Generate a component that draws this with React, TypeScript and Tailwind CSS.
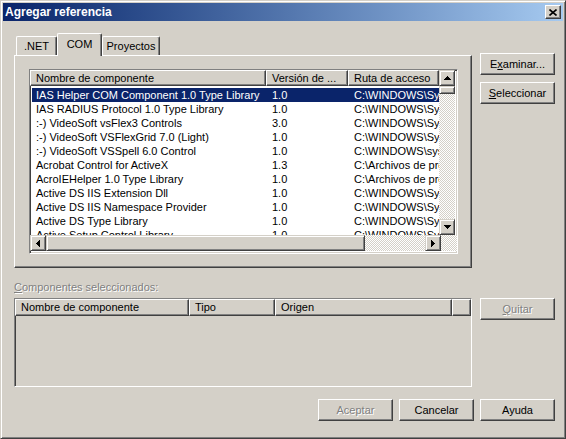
import React from 'react';

const raised = "border border-t-white border-l-white border-r-[#404040] border-b-[#404040] shadow-[inset_-1px_-1px_0_#808080]";
const sunken = "border border-t-[#808080] border-l-[#808080] border-r-white border-b-white shadow-[inset_1px_1px_0_#404040,inset_-1px_-1px_0_#d4d0c8]";
const scrollBtn = "border border-t-[#d4d0c8] border-l-[#d4d0c8] border-r-[#404040] border-b-[#404040] shadow-[inset_1px_1px_0_#ffffff,inset_-1px_-1px_0_#808080] bg-[#d4d0c8] flex items-center justify-center shrink-0";
const checker = "[background:repeating-conic-gradient(#d4d0c8_0_25%,#ffffff_0_50%)_0_0/2px_2px]";
const disabled = "text-[#808080] [text-shadow:1px_1px_0_#ffffff]";

const rows = [
    { name: 'IAS Helper COM Component 1.0 Type Library', ver: '1.0', path: 'C:\\WINDOWS\\System32\\iashlpr.dll' },
    { name: 'IAS RADIUS Protocol 1.0 Type Library', ver: '1.0', path: 'C:\\WINDOWS\\System32\\iasrad.dll' },
    { name: ':-) VideoSoft vsFlex3 Controls', ver: '3.0', path: 'C:\\WINDOWS\\System32\\vsflex3.ocx' },
    { name: ':-) VideoSoft VSFlexGrid 7.0 (Light)', ver: '1.0', path: 'C:\\WINDOWS\\System32\\vsflex7l.ocx' },
    { name: ':-) VideoSoft VSSpell 6.0 Control', ver: '1.0', path: 'C:\\WINDOWS\\system32\\vsspell6.ocx' },
    { name: 'Acrobat Control for ActiveX', ver: '1.3', path: 'C:\\Archivos de programa\\Adobe\\pdf.ocx' },
    { name: 'AcroIEHelper 1.0 Type Library', ver: '1.0', path: 'C:\\Archivos de programa\\Adobe\\AcroIEHelper.dll' },
    { name: 'Active DS IIS Extension Dll', ver: '1.0', path: 'C:\\WINDOWS\\System32\\inetsrv\\iisext.dll' },
    { name: 'Active DS IIS Namespace Provider', ver: '1.0', path: 'C:\\WINDOWS\\System32\\inetsrv\\adsiis.dll' },
    { name: 'Active DS Type Library', ver: '1.0', path: 'C:\\WINDOWS\\System32\\activeds.tlb' },
    { name: 'Active Setup Control Library', ver: '1.0', path: 'C:\\WINDOWS\\System32\\asctrls.ocx' },
];

const Arrow = ({ dir }: { dir: 'up' | 'down' | 'left' | 'right' }) => {
    const d = {
        up: 'M3 0h1v1h1v1h1v1h1v1H0V3h1V2h1V1h1z',
        down: 'M0 0h7v1h-1v1h-1v1h-1v1H3V3H2V2H1V1H0z',
        left: 'M3 0h1v7H3V6H2V5H1V4H0V3h1V2h1V1h1z',
        right: 'M0 0h1v1h1v1h1v1h1v1H3v1H2v1H1v1H0z',
    }[dir];
    const vertical = dir === 'up' || dir === 'down';
    return (
        <svg width={vertical ? 7 : 4} height={vertical ? 4 : 7} viewBox={vertical ? '0 0 7 4' : '0 0 4 7'} shapeRendering="crispEdges">
            <path d={d} fill="#000" />
        </svg>
    );
};

const Button = ({ children, off }: { children: React.ReactNode; off?: boolean }) => (
    <div className={`w-[75px] h-[22px] ${raised} bg-[#d4d0c8] flex items-center justify-center ${off ? disabled : ''}`}>
        <span>{children}</span>
    </div>
);

const HeaderCell = ({ children, w }: { children: React.ReactNode; w: string }) => (
    <div className={`${w} h-full ${raised} bg-[#d4d0c8] pl-[5px] leading-[14px] whitespace-nowrap overflow-hidden shrink-0`}>
        {children}
    </div>
);

const App = () => {
    return (
        <div className="w-[566px] h-[439px] bg-[#d4d0c8] border border-t-[#d4d0c8] border-l-[#d4d0c8] border-r-[#404040] border-b-[#404040] shadow-[inset_1px_1px_0_#ffffff,inset_-1px_-1px_0_#808080] p-[2px] flex flex-col font-['Liberation_Sans',Arial,sans-serif] text-[11px] text-black select-none">
            {/* title bar */}
            <div className="h-[18px] shrink-0 bg-linear-to-r from-[#0a246a] to-[#a6caf0] flex items-center justify-between pl-[2px] pr-[2px]">
                <span className="text-white font-bold text-[12px] leading-[18px]">Agregar referencia</span>
                <div className={`w-[16px] h-[14px] ${raised} bg-[#d4d0c8] flex items-center justify-center`}>
                    <svg width="8" height="7" viewBox="0 0 8 7">
                        <path d="M0.5 0.5l7 6M7.5 0.5l-7 6" stroke="#000" strokeWidth="1.6" />
                    </svg>
                </div>
            </div>

            <div className="flex-1 flex flex-col pl-[11px] pt-[12px]">
                {/* tabs + panel + right buttons */}
                <div className="flex items-start">
                    <div className="w-[458px] flex flex-col">
                        <div className="h-[22px] flex items-end pl-[2px]">
                            <div className="w-[41px] h-[19px] border-t border-l border-white border-r border-r-[#404040] shadow-[inset_-1px_0_0_#808080] rounded-tl-[2px] rounded-tr-[2px] flex items-center justify-center">
                                .NET
                            </div>
                            <div className="relative z-10 w-[45px] h-[23px] -mb-px bg-[#d4d0c8] border-t border-l border-white border-r border-r-[#404040] shadow-[inset_-1px_0_0_#808080] rounded-tl-[2px] rounded-tr-[2px] flex justify-center pt-[2px]">
                                COM
                            </div>
                            <div className="w-[58px] h-[19px] border-t border-l border-white border-r border-r-[#404040] shadow-[inset_-1px_0_0_#808080] rounded-tl-[2px] rounded-tr-[2px] flex items-center justify-center">
                                Proyectos
                            </div>
                        </div>
                        <div className={`h-[213px] ${raised} pl-[14px] pt-[13px]`}>
                            {/* component list */}
                            <div className={`w-[429px] h-[185px] ${sunken} bg-white flex flex-col`}>
                                <div className="flex h-[165px]">
                                    <div className="w-[409px] flex flex-col overflow-hidden">
                                        <div className="flex h-[16px] shrink-0">
                                            <HeaderCell w="w-[236px]">Nombre de componente</HeaderCell>
                                            <HeaderCell w="w-[82px]">Versión de ...</HeaderCell>
                                            <HeaderCell w="flex-1">Ruta de acceso</HeaderCell>
                                        </div>
                                        <div className="pt-[2px]">
                                            {rows.map((r, i) => (
                                                <div
                                                    key={r.name}
                                                    className={`flex h-[14px] leading-[14px] ml-[2px] whitespace-nowrap ${i === 0 ? 'bg-[#0a246a] text-white' : ''}`}
                                                >
                                                    <div className="w-[234px] pl-[4px] overflow-hidden shrink-0">{r.name}</div>
                                                    <div className="w-[82px] pl-[6px] shrink-0">{r.ver}</div>
                                                    <div className="flex-1 pl-[6px] overflow-hidden">{r.path}</div>
                                                </div>
                                            ))}
                                        </div>
                                    </div>
                                    {/* vertical scrollbar */}
                                    <div className="w-[16px] flex flex-col">
                                        <div className={`h-[16px] ${scrollBtn}`}><Arrow dir="up" /></div>
                                        <div className={`h-[8px] ${scrollBtn}`} />
                                        <div className={`flex-1 ${checker}`} />
                                        <div className={`h-[16px] ${scrollBtn}`}><Arrow dir="down" /></div>
                                    </div>
                                </div>
                                {/* horizontal scrollbar */}
                                <div className="flex h-[16px]">
                                    <div className={`w-[16px] ${scrollBtn}`}><Arrow dir="left" /></div>
                                    <div className={`w-[319px] ${scrollBtn}`} />
                                    <div className={`flex-1 ${checker}`} />
                                    <div className={`w-[16px] ${scrollBtn}`}><Arrow dir="right" /></div>
                                    <div className={`w-[16px] ${checker}`} />
                                </div>
                            </div>
                        </div>
                    </div>
                    <div className="ml-[8px] mt-[20px] flex flex-col gap-[7px]">
                        <Button>E<span className="underline">x</span>aminar...</Button>
                        <Button><span className="underline">S</span>eleccionar</Button>
                    </div>
                </div>

                {/* selected components */}
                <div className={`mt-[13px] h-[13px] leading-[13px] ${disabled}`}>
                    <span className="underline">C</span>omponentes seleccionados:
                </div>
                <div className="mt-[4px] flex items-start">
                    <div className={`w-[458px] h-[89px] ${sunken} bg-[#d4d0c8]`}>
                        <div className="flex h-[17px] leading-[15px]">
                            <HeaderCell w="w-[174px]">Nombre de componente</HeaderCell>
                            <HeaderCell w="w-[86px]">Tipo</HeaderCell>
                            <HeaderCell w="w-[177px]">Origen</HeaderCell>
                            <HeaderCell w="flex-1">{''}</HeaderCell>
                        </div>
                    </div>
                    <div className="ml-[8px]">
                        <Button off><span className="underline">Q</span>uitar</Button>
                    </div>
                </div>

                {/* dialog buttons */}
                <div className="mt-[12px] flex justify-end gap-[6px] pr-[8px]">
                    <Button off>Aceptar</Button>
                    <Button>Cancelar</Button>
                    <Button>Ayuda</Button>
                </div>
            </div>
        </div>
    );
};

export default App;
